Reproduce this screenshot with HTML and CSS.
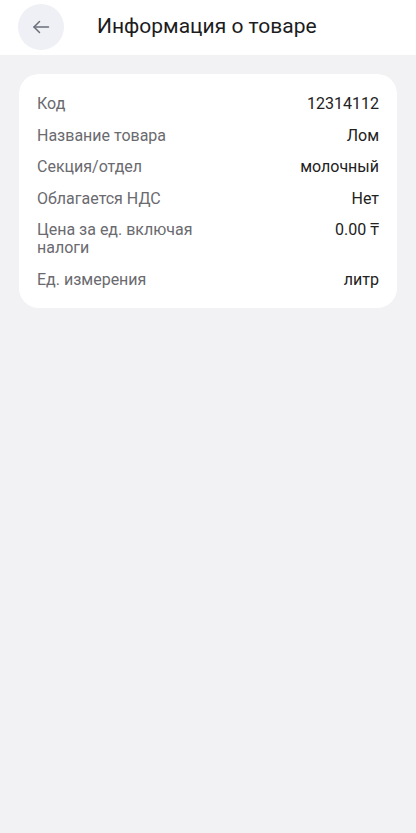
FILE: index.html
```html
<!DOCTYPE html>
<html lang="ru">
<head>
    <meta charset="utf-8"/>
    <title>Информация о товаре</title>
    <link rel="stylesheet" href="styles.css">
</head>
<body>
<div class="header">
    <button class="back-btn" aria-label="Назад">
        <svg width="20" height="20" viewBox="0 0 20 20" fill="none" stroke="#6b6f7a" stroke-width="1.5" stroke-linecap="round" stroke-linejoin="round">
            <path d="M17.5 10H3"/>
            <path d="M8.5 4.5L3 10L8.5 15.5"/>
        </svg>
    </button>
    <h1>Информация о товаре</h1>
</div>
<div class="content">
    <div class="card">
        <div class="row">
            <span class="label">Код</span>
            <span class="value">12314112</span>
        </div>
        <div class="row">
            <span class="label">Название товара</span>
            <span class="value">Лом</span>
        </div>
        <div class="row">
            <span class="label">Секция/отдел</span>
            <span class="value">молочный</span>
        </div>
        <div class="row">
            <span class="label">Облагается НДС</span>
            <span class="value">Нет</span>
        </div>
        <div class="row">
            <span class="label">Цена за ед. включая налоги</span>
            <span class="value">0.00 ₸</span>
        </div>
        <div class="row">
            <span class="label">Ед. измерения</span>
            <span class="value">литр</span>
        </div>
    </div>
</div>
</body>
</html>
```

FILE: styles.css
```css
* {
    box-sizing: border-box;
}

body {
    margin: 0;
    font-family: Roboto, "Noto Sans", Arial, sans-serif;
    background-color: #f2f2f5;
    min-height: 833px;
}

.header {
    display: flex;
    align-items: center;
    height: 55px;
    padding-left: 18px;
    background-color: #fff;
}

.back-btn {
    display: flex;
    align-items: center;
    justify-content: center;
    width: 46px;
    height: 46px;
    border: none;
    border-radius: 50%;
    background-color: #eff0f5;
    padding: 0;
    margin-top: -2px;
}

.header h1 {
    margin: -3px 0 0 33px;
    font-size: 21px;
    font-weight: 400;
    color: #1c1c1e;
}

.content {
    padding: 19px;
}

.card {
    display: flex;
    flex-direction: column;
    gap: 13.5px;
    background-color: #fff;
    border-radius: 20px;
    padding: 21px 18px 19px;
}

.row {
    display: flex;
    justify-content: space-between;
    align-items: flex-start;
    font-size: 16px;
    line-height: 18px;
}

.label {
    color: #6a6a6f;
    max-width: 190px;
}

.value {
    color: #222;
    text-align: right;
}
```
